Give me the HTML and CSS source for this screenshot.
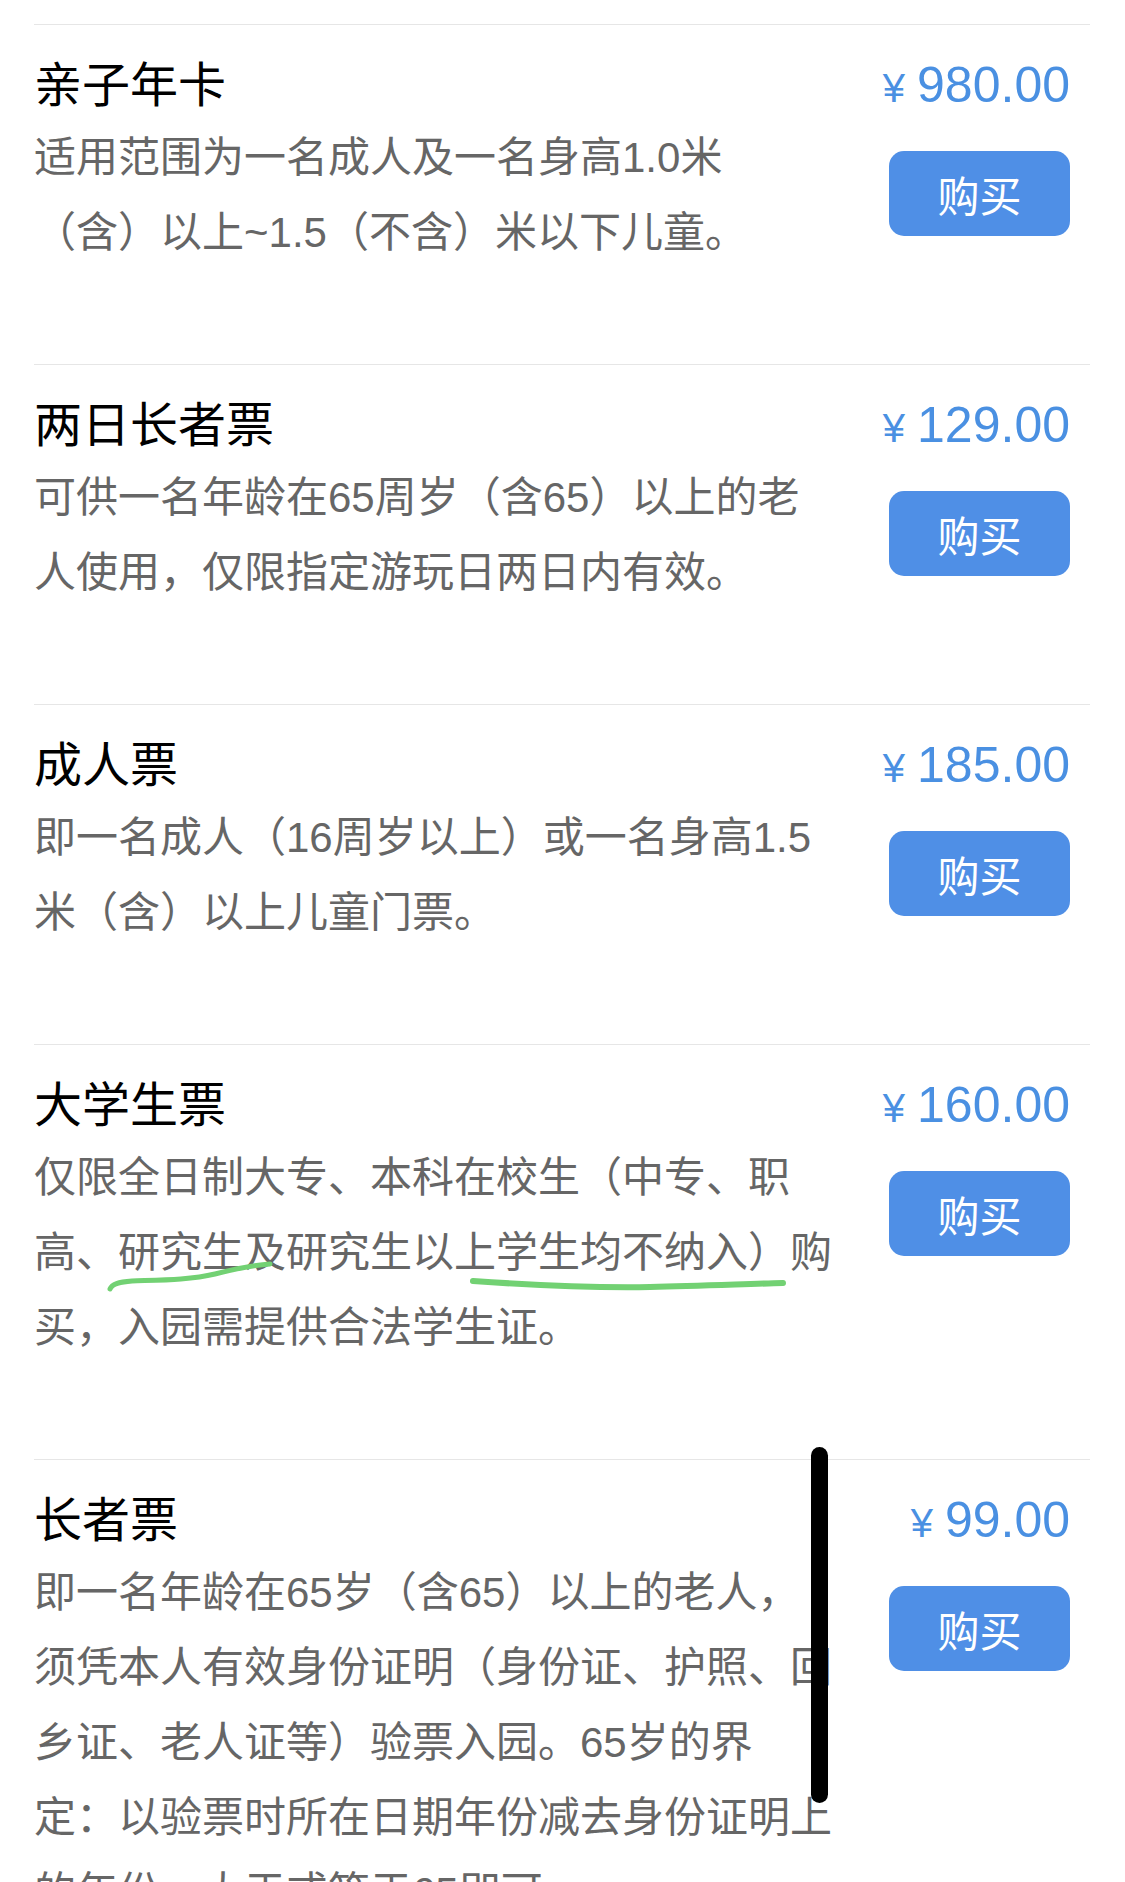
FILE: index.html
```html
<!DOCTYPE html>
<html lang="zh-CN">
<head>
<meta charset="utf-8">
<title>票种列表</title>
<link rel="stylesheet" href="styles.css">
</head>
<body>
<div class="page">
  <div class="list">
    <div class="item">
      <div class="info">
        <div class="title">亲子年卡</div>
        <div class="desc">适用范围为一名成人及一名身高1.0米（含）以上~1.5（不含）米以下儿童。</div>
      </div>
      <div class="side">
        <div class="price"><span class="cur">¥</span>980.00</div>
        <div class="buy">购买</div>
      </div>
    </div>
    <div class="item">
      <div class="info">
        <div class="title">两日长者票</div>
        <div class="desc">可供一名年龄在65周岁（含65）以上的老人使用，仅限指定游玩日两日内有效。</div>
      </div>
      <div class="side">
        <div class="price"><span class="cur">¥</span>129.00</div>
        <div class="buy">购买</div>
      </div>
    </div>
    <div class="item">
      <div class="info">
        <div class="title">成人票</div>
        <div class="desc">即一名成人（16周岁以上）或一名身高1.5米（含）以上儿童门票。</div>
      </div>
      <div class="side">
        <div class="price"><span class="cur">¥</span>185.00</div>
        <div class="buy">购买</div>
      </div>
    </div>
    <div class="item">
      <div class="info">
        <div class="title">大学生票</div>
        <div class="desc">仅限全日制大专、本科在校生（中专、职高、研究生及研究生以上学生均不纳入）购买，入园需提供合法学生证。</div>
      </div>
      <div class="side">
        <div class="price"><span class="cur">¥</span>160.00</div>
        <div class="buy">购买</div>
      </div>
    </div>
    <div class="item">
      <div class="info">
        <div class="title">长者票</div>
        <div class="desc">即一名年龄在65岁（含65）以上的老人，须凭本人有效身份证明（身份证、护照、回乡证、老人证等）验票入园。65岁的界定：以验票时所在日期年份减去身份证明上的年份，大于或等于65即可。</div>
      </div>
      <div class="side">
        <div class="price"><span class="cur">¥</span>99.00</div>
        <div class="buy">购买</div>
      </div>
    </div>
  </div>

  <svg class="marks" width="1125" height="1882" viewBox="0 0 1125 1882" aria-hidden="true">
    <path d="M110 1289 C112 1284 118 1282 132 1281 C160 1280 190 1280 215 1274 C235 1269 252 1265 270 1264" fill="none" stroke="#72d173" stroke-width="5" stroke-linecap="round"/>
    <path d="M473 1281 C530 1285 590 1288 650 1287 C700 1286 745 1284 783 1283" fill="none" stroke="#72d173" stroke-width="6" stroke-linecap="round"/>
  </svg>
  <div class="bar"></div>
</div>
</body>
</html>
```

FILE: styles.css
```css
html, body {
  margin: 0;
  padding: 0;
  background: #ffffff;
}

body {
  height: 1882px;
  overflow: hidden;
  font-family: "Liberation Sans", "Noto Sans CJK SC", sans-serif;
  text-spacing-trim: space-all;
}

.page {
  position: relative;
  width: 1125px;
  height: 1882px;
  overflow: hidden;
}

.list {
  padding-top: 24px;
}

.item {
  display: flex;
  justify-content: space-between;
  margin: 0 35px 0 34px;
  padding: 20px 20px 94px 0;
  border-top: 1px solid #e6e6e6;
}

.info {
  flex: 0 0 800px;
  width: 800px;
}

.title {
  font-size: 48px;
  line-height: 75px;
  padding-top: 3px;
  margin-bottom: -3px;
  color: #000000;
}

.desc {
  font-size: 42px;
  line-height: 75px;
  color: #666666;
}

.side {
  display: flex;
  flex-direction: column;
  align-items: flex-end;
}

.price {
  margin-top: 3px;
  font-size: 50px;
  line-height: 75px;
  color: #4a90e2;
  white-space: nowrap;
}

.cur {
  font-size: 40px;
  margin-right: 12px;
}

.buy {
  margin-top: 25px;
  width: 181px;
  height: 85px;
  border-radius: 15px;
  background: #4f8fe6;
  color: #ffffff;
  font-family: "Noto Sans CJK SC", sans-serif;
  font-size: 42px;
  display: flex;
  align-items: center;
  justify-content: center;
}

.marks {
  position: absolute;
  left: 0;
  top: 0;
  pointer-events: none;
}

.bar {
  position: absolute;
  left: 811px;
  top: 1447px;
  width: 17px;
  height: 356px;
  border-radius: 9px;
  background: #000000;
}
```
